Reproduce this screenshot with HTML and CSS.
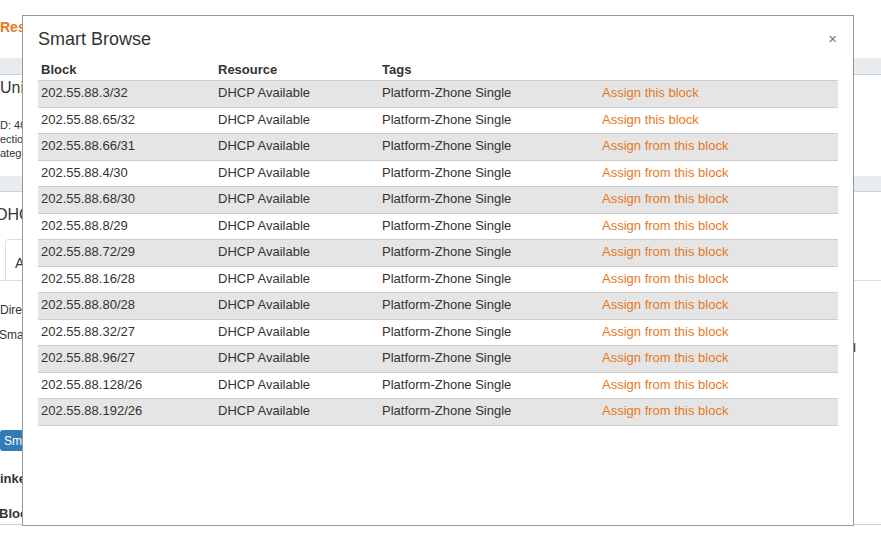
FILE: index.html
```html
<!DOCTYPE html>
<html lang="en">

<head>
  <meta charset="utf-8">
  <title>Smart Browse</title>
  <link rel="stylesheet" href="styles.css">
</head>

<body>
  <div class="page">
    <div class="crumb">Resource</div>
    <div class="band"></div>
    <h2 class="sectionTitle">Unicast Block</h2>
    <div class="meta">
      <div class="cut">ID: 4012</div>
      <div>ection: Default</div>
      <div>ategory: Block</div>
    </div>
    <div class="band band2"></div>
    <h2 class="sectionTitle dhcp">DHCP</h2>
    <ul class="tabs">
      <li class="tab">Assign</li>
    </ul>
    <div class="fields">
      <div>Direct</div>
      <div class="cutSmall">Smart Browse</div>
      <div class="farRight">Selected</div>
    </div>
    <button class="smartBtn">Smart Browse</button>
    <div class="label">Linked</div>
    <div class="label lastLabel">Block</div>
  </div>

  <div class="modal">
    <div class="modalHeader">
      <h3 class="modalTitle">Smart Browse</h3>
      <span class="close">&times;</span>
    </div>

    <table class="browseTable">
      <colgroup>
        <col class="colBlock">
        <col class="colResource">
        <col class="colTags">
        <col class="colAction">
      </colgroup>
      <thead>
        <tr>
          <th>Block</th>
          <th>Resource</th>
          <th>Tags</th>
          <th></th>
        </tr>
      </thead>
      <tbody>
        <tr><td>202.55.88.3/32</td><td>DHCP Available</td><td>Platform-Zhone Single</td><td><a href="#">Assign this block</a></td></tr>
        <tr><td>202.55.88.65/32</td><td>DHCP Available</td><td>Platform-Zhone Single</td><td><a href="#">Assign this block</a></td></tr>
        <tr><td>202.55.88.66/31</td><td>DHCP Available</td><td>Platform-Zhone Single</td><td><a href="#">Assign from this block</a></td></tr>
        <tr><td>202.55.88.4/30</td><td>DHCP Available</td><td>Platform-Zhone Single</td><td><a href="#">Assign from this block</a></td></tr>
        <tr><td>202.55.88.68/30</td><td>DHCP Available</td><td>Platform-Zhone Single</td><td><a href="#">Assign from this block</a></td></tr>
        <tr><td>202.55.88.8/29</td><td>DHCP Available</td><td>Platform-Zhone Single</td><td><a href="#">Assign from this block</a></td></tr>
        <tr><td>202.55.88.72/29</td><td>DHCP Available</td><td>Platform-Zhone Single</td><td><a href="#">Assign from this block</a></td></tr>
        <tr><td>202.55.88.16/28</td><td>DHCP Available</td><td>Platform-Zhone Single</td><td><a href="#">Assign from this block</a></td></tr>
        <tr><td>202.55.88.80/28</td><td>DHCP Available</td><td>Platform-Zhone Single</td><td><a href="#">Assign from this block</a></td></tr>
        <tr><td>202.55.88.32/27</td><td>DHCP Available</td><td>Platform-Zhone Single</td><td><a href="#">Assign from this block</a></td></tr>
        <tr><td>202.55.88.96/27</td><td>DHCP Available</td><td>Platform-Zhone Single</td><td><a href="#">Assign from this block</a></td></tr>
        <tr><td>202.55.88.128/26</td><td>DHCP Available</td><td>Platform-Zhone Single</td><td><a href="#">Assign from this block</a></td></tr>
        <tr><td>202.55.88.192/26</td><td>DHCP Available</td><td>Platform-Zhone Single</td><td><a href="#">Assign from this block</a></td></tr>
      </tbody>
    </table>
  </div>
</body>

</html>
```

FILE: styles.css
```css
body {
  background-color: #fff;
  color: #333;
  font-family: "Liberation Sans", Arial, sans-serif;
  font-size: 13px;
  margin: 0;
  overflow: hidden;
  padding: 0;
}

/* page behind the dialog */
.page {
  padding-top: 17px;
}

.crumb {
  color: #e5781e;
  font-size: 14px;
  font-weight: bold;
  line-height: 20px;
}

.band {
  background-color: #e9ecef;
  border-bottom: 1px solid #cfd2d5;
  height: 16px;
  margin-top: 21px;
}

.band2 {
  height: 15px;
  margin-top: 16px;
}

.sectionTitle {
  font-size: 16px;
  font-weight: normal;
  line-height: 20px;
  margin: 3px 0 0 0;
}

.dhcp {
  margin: 13px 0 0 -4px;
}

.meta {
  font-size: 11px;
  line-height: 14px;
  margin-top: 20px;
}

.cut {
  margin-left: -3px;
}

.tabs {
  border-bottom: 1px solid #ddd;
  display: flex;
  list-style: none;
  margin: 14px 0 0 0;
  padding: 0 0 0 5px;
}

.tab {
  border: 1px solid #ddd;
  border-bottom: none;
  border-radius: 4px 4px 0 0;
  font-size: 14px;
  line-height: 20px;
  padding: 13px 10px 7px 9px;
  width: 200px;
}

.fields {
  font-size: 12px;
  line-height: 25px;
  margin-top: 17px;
}

.cutSmall {
  margin-left: -1px;
}

.farRight {
  font-size: 13px;
  line-height: 0;
  padding-right: 25px;
  text-align: right;
}

.smartBtn {
  background-color: #337ab7;
  border: none;
  border-radius: 3px;
  color: #fff;
  display: block;
  font-family: inherit;
  font-size: 12px;
  height: 21px;
  margin: 82px 0 0 0;
  padding: 0 0 0 4px;
  text-align: left;
  width: 120px;
}

.label {
  font-weight: bold;
  line-height: 20px;
  margin: 18px 0 0 -8px;
}

.lastLabel {
  border-bottom: 1px solid #ccc;
  margin: 15px 0 0 -1px;
}

/* dialog */
.modal {
  background-color: #fff;
  border: 1px solid #999;
  box-sizing: border-box;
  height: 511px;
  left: 22px;
  padding: 13px 15px;
  position: absolute;
  top: 15px;
  width: 832px;
}

.modalHeader {
  align-items: center;
  display: flex;
  justify-content: space-between;
  margin-bottom: 10.5px;
}

.modalTitle {
  font-size: 18px;
  font-weight: normal;
  line-height: 20px;
  margin: 0;
}

.close {
  color: #777;
  cursor: pointer;
  font-size: 15px;
  line-height: 20px;
  margin-right: 1px;
}

.browseTable {
  border-collapse: collapse;
  table-layout: fixed;
  width: 800px;
}

.colBlock {
  width: 177px;
}

.colResource {
  width: 164px;
}

.colTags {
  width: 220px;
}

.colAction {
  width: 239px;
}

.browseTable th {
  font-weight: bold;
  line-height: 19.5px;
  padding: 0 3px 1px 3px;
  text-align: left;
}

.browseTable td {
  border-top: 1px solid #ccc;
  line-height: 19.5px;
  padding: 2px 3px 4px 3px;
  white-space: nowrap;
}

.browseTable tbody tr:nth-child(odd) {
  background-color: #e5e5e5;
}

.browseTable tbody tr:last-child td {
  border-bottom: 1px solid #ccc;
}

.browseTable a {
  color: #e5781e;
  text-decoration: none;
}
```
